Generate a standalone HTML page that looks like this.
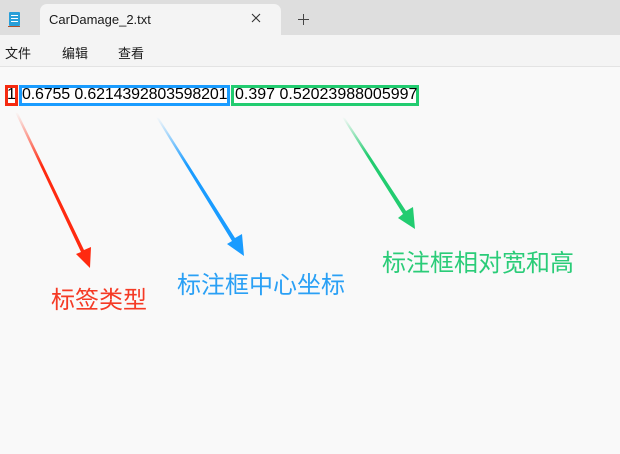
<!DOCTYPE html>
<html><head><meta charset="utf-8"><style>
*{margin:0;padding:0;box-sizing:border-box}
body{width:620px;height:454px;overflow:hidden;background:#f9f9f9;font-family:"Liberation Sans","Noto Sans CJK SC",sans-serif;position:relative}
.abs{position:absolute}
.t{position:absolute;top:86px;font-size:16px;color:#000;white-space:pre}
</style></head><body>
<div class="abs" style="left:0;top:0;width:620px;height:35px;background:#dedede"></div>
<div class="abs" style="left:40px;top:4px;width:241px;height:32px;background:#f4f4f4;border-radius:7px 7px 0 0"></div>
<div class="abs" style="left:9px;top:12px;width:11px;height:14px;background:#2a9fd8;border-radius:1px"></div>
<div class="abs" style="left:11px;top:15px;width:7px;height:1px;background:#fff;box-shadow:0 3px #fff,0 6px #fff"></div>
<div class="abs" style="left:8px;top:26px;width:12px;height:1px;background:#b0502a"></div>
<div class="abs" style="left:49px;top:12px;font-size:13px;color:#1a1a1a">CarDamage_2.txt</div>
<svg class="abs" style="left:251px;top:13px" width="10" height="10"><path d="M1 1L9 9M9 1L1 9" stroke="#333" stroke-width="1.1"/></svg>
<svg class="abs" style="left:298px;top:14px" width="11" height="11"><path d="M5.5 0V11M0 5.5H11" stroke="#444" stroke-width="1"/></svg>
<div class="abs" style="left:0;top:35px;width:620px;height:32px;background:#f4f4f4;border-bottom:1px solid #e3e3e3"></div>
<div class="abs" style="left:5px;top:43px;font-size:13px;color:#1a1a1a">文件</div>
<div class="abs" style="left:62px;top:43px;font-size:13px;color:#1a1a1a">编辑</div>
<div class="abs" style="left:118px;top:43px;font-size:13px;color:#1a1a1a">查看</div>
<div class="abs" style="left:5px;top:85px;width:13px;height:21px;background:#f52a10"></div>
<div class="abs" style="left:8px;top:88px;width:7px;height:15px;background:#fff"></div>
<div class="abs" style="left:19px;top:85px;width:211px;height:21px;border:3px solid #1a9cff;background:#fff"></div>
<div class="abs" style="left:231px;top:85px;width:188px;height:21px;border:3px solid #22cc70;background:#fff"></div>
<div class="t" style="left:7px">1</div>
<div class="t" style="left:22px;letter-spacing:-0.15px">0.6755 0.6214392803598201</div>
<div class="t" style="left:235px;letter-spacing:0px">0.397 0.52023988005997</div>
<svg class="abs" style="left:0;top:0" width="620" height="454">
<defs>
<linearGradient id="r" x1="0" y1="0" x2="0" y2="1"><stop offset="0" stop-color="#ff2a10" stop-opacity="0"/><stop offset=".35" stop-color="#ff2a10"/></linearGradient>
<linearGradient id="b" x1="0" y1="0" x2="0" y2="1"><stop offset="0" stop-color="#1a9cff" stop-opacity="0"/><stop offset=".35" stop-color="#1a9cff"/></linearGradient>
<linearGradient id="g" x1="0" y1="0" x2="0" y2="1"><stop offset="0" stop-color="#22cc70" stop-opacity="0"/><stop offset=".35" stop-color="#22cc70"/></linearGradient>
</defs>
<polygon points="15,112 18,113 84,250 91,247 90,268 76,254 81,252" fill="url(#r)"/>
<polygon points="156,117 159,118 235,238 242,234 244,256 227,244 232,241" fill="url(#b)"/>
<polygon points="342,117 345,118 406,211 413,207 415,229 398,218 403,214" fill="url(#g)"/>
</svg>
<div class="abs" style="left:51px;top:280px;font-size:24px;color:#f53a25">标签类型</div>
<div class="abs" style="left:177px;top:265px;font-size:24px;color:#2aa0f5">标注框中心坐标</div>
<div class="abs" style="left:382px;top:243px;font-size:24px;color:#2acc78">标注框相对宽和高</div>
</body></html>
